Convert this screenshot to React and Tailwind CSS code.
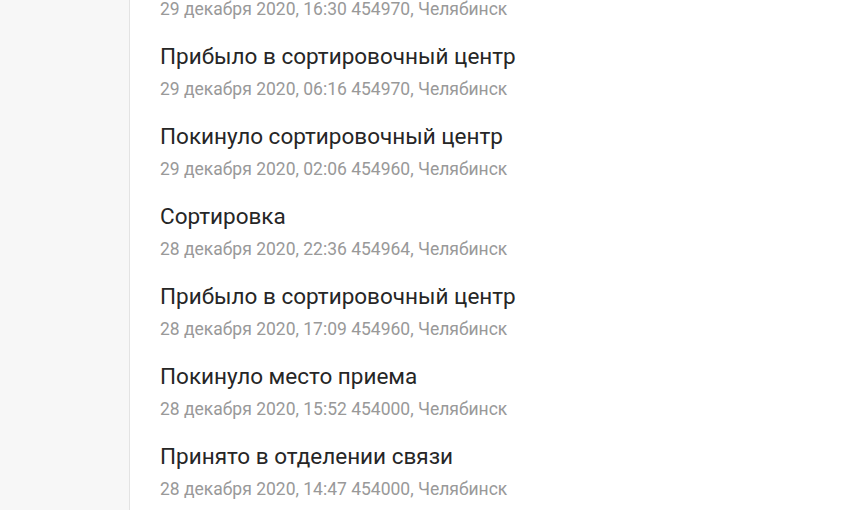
const EVENTS = [
  { title: "Прибыло в сортировочный центр", meta: "29 декабря 2020, 16:30 454970, Челябинск" },
  { title: "Прибыло в сортировочный центр", meta: "29 декабря 2020, 06:16 454970, Челябинск" },
  { title: "Покинуло сортировочный центр", meta: "29 декабря 2020, 02:06 454960, Челябинск" },
  { title: "Сортировка", meta: "28 декабря 2020, 22:36 454964, Челябинск" },
  { title: "Прибыло в сортировочный центр", meta: "28 декабря 2020, 17:09 454960, Челябинск" },
  { title: "Покинуло место приема", meta: "28 декабря 2020, 15:52 454000, Челябинск" },
  { title: "Принято в отделении связи", meta: "28 декабря 2020, 14:47 454000, Челябинск" },
]

export default function App() {
  return (
    <div className="flex h-[510px] w-[850px] overflow-hidden bg-white" style={{ fontFamily: "Roboto, 'Noto Sans', sans-serif" }}>
      <aside className="w-[130px] shrink-0 bg-[#f7f7f7] border-r border-[#e3e3e3]" />
      <main className="flex-1 pl-[30px]">
        <ul className="-mt-[38px] flex flex-col gap-[21px]">
          {EVENTS.map((e, i) => (
            <li key={i}>
              <p className="text-[22.5px] leading-[28px] text-[#262626]">{e.title}</p>
              <p className="mt-[7px] text-[17.5px] leading-[24px] text-[#999]">{e.meta}</p>
            </li>
          ))}
        </ul>
      </main>
    </div>
  )
}
